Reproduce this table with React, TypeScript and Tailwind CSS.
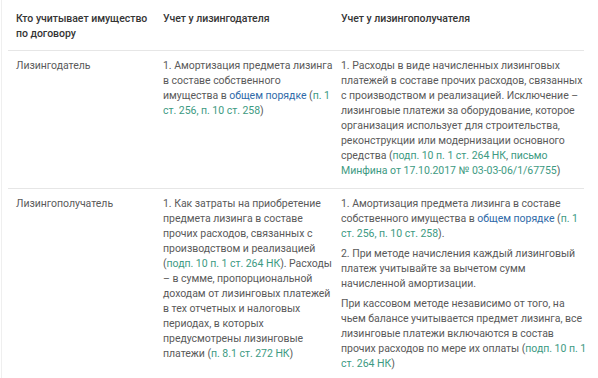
import React from 'react';

const Blue = ({ children }: { children: React.ReactNode }) => (
  <span className="text-[#2f6aa8]">{children}</span>
);

const Green = ({ children }: { children: React.ReactNode }) => (
  <span className="text-[#3d9a82]">{children}</span>
);

const cols = 'grid grid-cols-[147px_178px_1fr] pl-2 whitespace-nowrap';

const App: React.FC = () => {
  return (
    <div
      className="w-[598px] h-[378px] overflow-hidden bg-white text-[10.5px] leading-[15px] tracking-[-0.03px] text-[#5a5a5a]"
      style={{ fontFamily: 'Roboto, "Noto Sans", sans-serif' }}
    >
      <div className="h-full ml-px border-l border-[#efefef] pl-[6px]">
        <div className="w-[576px]">
          {/* Header */}
          <div className={`${cols} border-b border-[#e6e6e6] pt-[11px] pb-[9px] font-medium text-[#353535]`}>
            <div>
              Кто учитывает имущество
              <br />
              по договору
            </div>
            <div>Учет у лизингодателя</div>
            <div>Учет у лизингополучателя</div>
          </div>

          {/* Row 1 */}
          <div className={`${cols} border-b border-[#e6e6e6] pt-[7px] pb-[10px]`}>
            <div>Лизингодатель</div>
            <div>
              1. Амортизация предмета лизинга
              <br />
              в составе собственного
              <br />
              имущества в <Blue>общем порядке</Blue> (<Green>п. 1</Green>
              <br />
              <Green>ст. 256, п. 10 ст. 258</Green>)
            </div>
            <div>
              1. Расходы в виде начисленных лизинговых
              <br />
              платежей в составе прочих расходов, связанных
              <br />
              с производством и реализацией. Исключение –
              <br />
              лизинговые платежи за оборудование, которое
              <br />
              организация использует для строительства,
              <br />
              реконструкции или модернизации основного
              <br />
              средства (<Green>подп. 10 п. 1 ст. 264 НК</Green>, <Green>письмо</Green>
              <br />
              <Green>Минфина от 17.10.2017 № 03-03-06/1/67755</Green>)
            </div>
          </div>

          {/* Row 2 */}
          <div className={`${cols} pt-[7px]`}>
            <div>Лизингополучатель</div>
            <div>
              1. Как затраты на приобретение
              <br />
              предмета лизинга в составе
              <br />
              прочих расходов, связанных с
              <br />
              производством и реализацией
              <br />
              (<Green>подп. 10 п. 1 ст. 264 НК</Green>). Расходы
              <br />
              – в сумме, пропорциональной
              <br />
              доходам от лизинговых платежей
              <br />
              в тех отчетных и налоговых
              <br />
              периодах, в которых
              <br />
              предусмотрены лизинговые
              <br />
              платежи (<Green>п. 8.1 ст. 272 НК</Green>)
            </div>
            <div className="flex flex-col gap-[5px]">
              <p>
                1. Амортизация предмета лизинга в составе
                <br />
                собственного имущества в <Blue>общем порядке</Blue> (<Green>п. 1</Green>
                <br />
                <Green>ст. 256, п. 10 ст. 258</Green>).
              </p>
              <p>
                2. При методе начисления каждый лизинговый
                <br />
                платеж учитывайте за вычетом сумм
                <br />
                начисленной амортизации.
              </p>
              <p>
                При кассовом методе независимо от того, на
                <br />
                чьем балансе учитывается предмет лизинга, все
                <br />
                лизинговые платежи включаются в состав
                <br />
                прочих расходов по мере их оплаты (<Green>подп. 10 п. 1</Green>
                <br />
                <Green>ст. 264 НК</Green>)
              </p>
            </div>
          </div>
        </div>
      </div>
    </div>
  );
};

export default App;
